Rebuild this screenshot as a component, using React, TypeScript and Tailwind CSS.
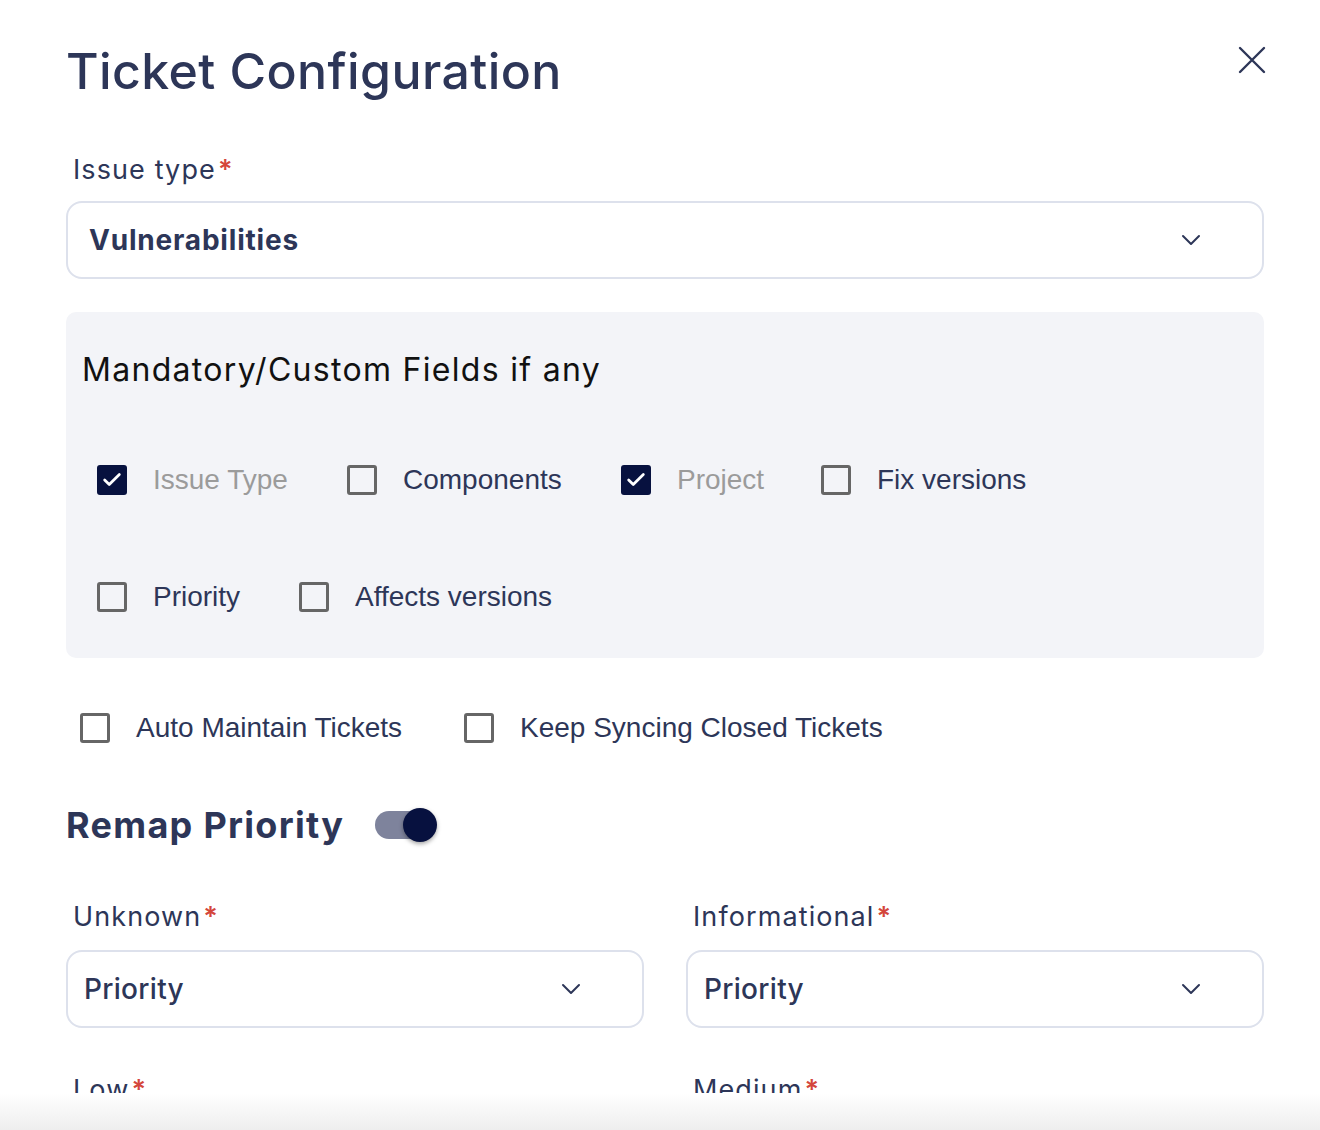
import { Check, ChevronDown } from "lucide-react";

const HEAD = "font-['Inter','Noto_Sans',sans-serif]";
const BODY = "font-['Liberation_Sans','Arial',sans-serif]";

type Field = { label: string; checked?: boolean };

function Box({ checked }: { checked?: boolean }) {
  if (checked) {
    return (
      <span className="flex h-[30px] w-[30px] shrink-0 items-center justify-center rounded-[3px] bg-[#07113f]">
        <Check className="h-[22px] w-[22px] text-white" strokeWidth={3} />
      </span>
    );
  }
  return <span className="h-[30px] w-[30px] shrink-0 rounded-[3px] border-[3px] border-[#666666]" />;
}

function CheckItem({ label, checked, className = "" }: Field & { className?: string }) {
  return (
    <label className={`flex items-center gap-[26px] ${className}`}>
      <Box checked={checked} />
      <span className={`${BODY} text-[28px] ${checked ? "text-[#9b9b9b]" : "text-[#2d3658]"}`}>{label}</span>
    </label>
  );
}

function Label({ text }: { text: string }) {
  return (
    <div className={`${HEAD} flex items-start pl-[7px] text-[27px] tracking-[1.1px] text-[#2d3658]`}>
      <span>{text}</span>
      <span className="ml-[2px] font-semibold text-[#d4463b]">*</span>
    </div>
  );
}

function Select({ value, bold }: { value: string; bold?: boolean }) {
  return (
    <div
      className={`flex h-[78px] items-center justify-between rounded-[16px] border-2 border-[#dde1ec] bg-white pr-[55px] ${
        bold ? "pl-[21px]" : "pl-[16px]"
      }`}
    >
      <span
        className={`${HEAD} text-[28px] text-[#2d3658] ${
          bold ? "font-bold tracking-[0.8px]" : "font-medium tracking-[0.3px]"
        }`}
      >
        {value}
      </span>
      <ChevronDown className="h-[32px] w-[32px] text-[#2d3658]" strokeWidth={1.5} />
    </div>
  );
}

export default function App() {
  return (
    <div className="flex h-[1130px] w-[1320px] flex-col bg-white">
      <div className="h-[1093px] overflow-hidden pl-[66px] pr-[56px]">
        <div className="flex items-start justify-between pt-[40px]">
          <h1 className={`${HEAD} text-[50px] font-medium leading-[62px] tracking-[0.4px] text-[#2d3658]`}>
            Ticket Configuration
          </h1>
          <button className="mr-[-2px] mt-[6px] text-[#2d3658]">
            <svg width="28" height="28" viewBox="0 0 28 28" fill="none" stroke="currentColor" strokeWidth="2.4" strokeLinecap="round">
              <path d="M2 2 26 26M26 2 2 26" />
            </svg>
          </button>
        </div>

        <div className="mt-[48px]">
          <Label text="Issue type" />
          <div className="mt-[10px]">
            <Select value="Vulnerabilities" bold />
          </div>
        </div>

        <div className="mt-[33px] rounded-[10px] bg-[#f3f4f8] px-[16px] pb-[40px] pt-[34px]">
          <h2 className={`${HEAD} text-[32px] tracking-[1.3px] text-[#111111]`}>Mandatory/Custom Fields if any</h2>
          <div className="mt-[65px] flex flex-col gap-[75px] pl-[15px]">
            <div className="flex items-center">
              <CheckItem label="Issue Type" checked className="w-[250px]" />
              <CheckItem label="Components" className="w-[274px]" />
              <CheckItem label="Project" checked className="w-[200px]" />
              <CheckItem label="Fix versions" />
            </div>
            <div className="flex items-center">
              <CheckItem label="Priority" className="w-[202px]" />
              <CheckItem label="Affects versions" />
            </div>
          </div>
        </div>

        <div className="mt-[49px] flex items-center pl-[14px]">
          <CheckItem label="Auto Maintain Tickets" className="w-[384px]" />
          <CheckItem label="Keep Syncing Closed Tickets" />
        </div>

        <div className="mt-[49px] flex items-center gap-[31px]">
          <h3 className={`${HEAD} text-[36px] font-bold tracking-[1.3px] text-[#2d3658]`}>Remap Priority</h3>
          <div className="relative h-[28px] w-[58px] rounded-full bg-[#7e839c]">
            <span className="absolute right-[-4px] top-[-3px] h-[34px] w-[34px] rounded-full bg-[#07113f] shadow-[0_2px_4px_rgba(0,0,0,0.35)]" />
          </div>
        </div>

        <div className="mt-[45px] grid grid-cols-2 gap-x-[42px] gap-y-[42px]">
          <div>
            <Label text="Unknown" />
            <div className="mt-[13px]">
              <Select value="Priority" />
            </div>
          </div>
          <div>
            <Label text="Informational" />
            <div className="mt-[13px]">
              <Select value="Priority" />
            </div>
          </div>
          <div>
            <Label text="Low" />
          </div>
          <div>
            <Label text="Medium" />
          </div>
        </div>
      </div>
      <div className="h-[37px] bg-gradient-to-b from-white to-[#eeeeee]" />
    </div>
  );
}
